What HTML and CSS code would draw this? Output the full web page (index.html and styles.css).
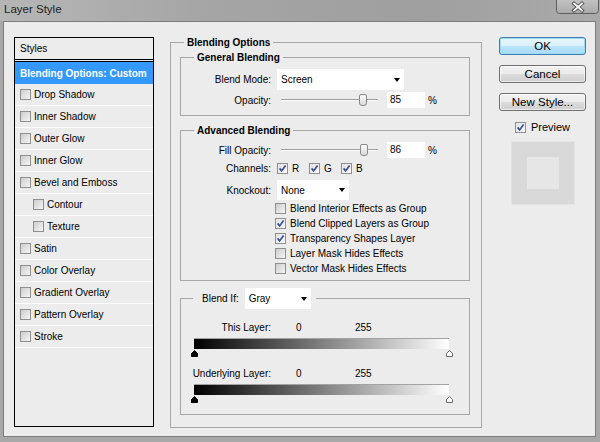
FILE: index.html
```html
<!DOCTYPE html>
<html lang="en">
<head>
    <meta charset="UTF-8">
    <meta name="viewport" content="width=device-width, initial-scale=1.0">
    <title>Layer Style</title>
    <link rel="stylesheet" href="styles.css">
</head>
<body>
<div class="window">
    <div class="titlebar">
        <span class="title">Layer Style</span>
        <span class="close-btn">
            <svg width="43" height="14" viewBox="0 0 43 14">
                <defs>
                    <linearGradient id="closeBg" x1="0" y1="0" x2="0" y2="1">
                        <stop offset="0" stop-color="#c9c9c9"/>
                        <stop offset="1" stop-color="#a9a9a9"/>
                    </linearGradient>
                </defs>
                <rect x="0.5" y="-4" width="42" height="17.5" rx="3" fill="url(#closeBg)" stroke="#5e5e5e"/>
                <path d="M18 3.5 L26 10.5 M26 3.5 L18 10.5" stroke="#4a4a4a" stroke-width="3.6" stroke-linecap="square"/>
                <path d="M18 3.5 L26 10.5 M26 3.5 L18 10.5" stroke="#fff" stroke-width="1.8" stroke-linecap="square"/>
            </svg>
        </span>
    </div>

    <div class="dialog">
        <div class="style-list">
            <div class="list-head">Styles</div>
            <div class="list-item selected">Blending Options: Custom</div>
            <div class="list-item"><span class="cb"></span>Drop Shadow</div>
            <div class="list-item"><span class="cb"></span>Inner Shadow</div>
            <div class="list-item"><span class="cb"></span>Outer Glow</div>
            <div class="list-item"><span class="cb"></span>Inner Glow</div>
            <div class="list-item"><span class="cb"></span>Bevel and Emboss</div>
            <div class="list-item sub"><span class="cb"></span>Contour</div>
            <div class="list-item sub"><span class="cb"></span>Texture</div>
            <div class="list-item"><span class="cb"></span>Satin</div>
            <div class="list-item"><span class="cb"></span>Color Overlay</div>
            <div class="list-item"><span class="cb"></span>Gradient Overlay</div>
            <div class="list-item"><span class="cb"></span>Pattern Overlay</div>
            <div class="list-item"><span class="cb"></span>Stroke</div>
        </div>

        <fieldset class="group outer">
            <legend>Blending Options</legend>

            <fieldset class="group general">
                <legend>General Blending</legend>
                <div class="row select-row">
                    <span class="row-label">Blend Mode:</span>
                    <div class="select blend-mode">Screen<span class="arrow"></span></div>
                </div>
                <div class="row value-row">
                    <span class="row-label">Opacity:</span>
                    <div class="slider"><span class="thumb" style="left: 85%"></span></div>
                    <div class="num">85</div>
                    <span class="pct">%</span>
                </div>
            </fieldset>

            <fieldset class="group advanced">
                <legend>Advanced Blending</legend>
                <div class="row value-row">
                    <span class="row-label">Fill Opacity:</span>
                    <div class="slider"><span class="thumb" style="left: 86%"></span></div>
                    <div class="num">86</div>
                    <span class="pct">%</span>
                </div>
                <div class="row channels-row">
                    <span class="row-label">Channels:</span>
                    <span class="channel"><span class="cb checked"><svg width="9" height="9" viewBox="0 0 9 9"><path d="M1.6 4.4 L3.6 6.9 L7.6 1.4" fill="none" stroke="#3b4f96" stroke-width="1.7"/></svg></span>R</span>
                    <span class="channel"><span class="cb checked"><svg width="9" height="9" viewBox="0 0 9 9"><path d="M1.6 4.4 L3.6 6.9 L7.6 1.4" fill="none" stroke="#3b4f96" stroke-width="1.7"/></svg></span>G</span>
                    <span class="channel"><span class="cb checked"><svg width="9" height="9" viewBox="0 0 9 9"><path d="M1.6 4.4 L3.6 6.9 L7.6 1.4" fill="none" stroke="#3b4f96" stroke-width="1.7"/></svg></span>B</span>
                </div>
                <div class="row knockout-row">
                    <span class="row-label">Knockout:</span>
                    <div class="select knockout">None<span class="arrow"></span></div>
                </div>
                <div class="checks">
                    <div class="check-row"><span class="cb"></span>Blend Interior Effects as Group</div>
                    <div class="check-row"><span class="cb checked"><svg width="9" height="9" viewBox="0 0 9 9"><path d="M1.6 4.4 L3.6 6.9 L7.6 1.4" fill="none" stroke="#3b4f96" stroke-width="1.7"/></svg></span>Blend Clipped Layers as Group</div>
                    <div class="check-row"><span class="cb checked"><svg width="9" height="9" viewBox="0 0 9 9"><path d="M1.6 4.4 L3.6 6.9 L7.6 1.4" fill="none" stroke="#3b4f96" stroke-width="1.7"/></svg></span>Transparency Shapes Layer</div>
                    <div class="check-row"><span class="cb"></span>Layer Mask Hides Effects</div>
                    <div class="check-row"><span class="cb"></span>Vector Mask Hides Effects</div>
                </div>
            </fieldset>

            <fieldset class="group blend-if">
                <legend>
                    <span>Blend If:</span>
                    <div class="select gray">Gray<span class="arrow"></span></div>
                </legend>
                <div class="row layer-row">
                    <span class="row-label">This Layer:</span>
                    <span class="val">0</span>
                    <span>255</span>
                </div>
                <div class="gradient-bar"></div>
                <div class="handles">
                    <svg width="7" height="7" viewBox="0 0 7 7"><path d="M3.5 0.5 L6.5 3.5 V6.5 H0.5 V3.5 Z" fill="#000" stroke="#000"/></svg>
                    <svg width="7" height="7" viewBox="0 0 7 7"><path d="M3.5 0.5 L6.5 3.5 V6.5 H0.5 V3.5 Z" fill="#fff" stroke="#6a6a6a"/></svg>
                </div>
                <div class="row layer-row second">
                    <span class="row-label">Underlying Layer:</span>
                    <span class="val">0</span>
                    <span>255</span>
                </div>
                <div class="gradient-bar"></div>
                <div class="handles">
                    <svg width="7" height="7" viewBox="0 0 7 7"><path d="M3.5 0.5 L6.5 3.5 V6.5 H0.5 V3.5 Z" fill="#000" stroke="#000"/></svg>
                    <svg width="7" height="7" viewBox="0 0 7 7"><path d="M3.5 0.5 L6.5 3.5 V6.5 H0.5 V3.5 Z" fill="#fff" stroke="#6a6a6a"/></svg>
                </div>
            </fieldset>
        </fieldset>

        <div class="actions">
            <button class="btn default">OK</button>
            <button class="btn">Cancel</button>
            <button class="btn">New Style...</button>
            <div class="preview-check">
                <span class="cb checked"><svg width="9" height="9" viewBox="0 0 9 9"><path d="M1.6 4.4 L3.6 6.9 L7.6 1.4" fill="none" stroke="#3b4f96" stroke-width="1.7"/></svg></span>Preview
            </div>
            <div class="swatch"><div class="swatch-inner"></div></div>
        </div>
    </div>
</div>
</body>
</html>
```

FILE: styles.css
```css
* {
    box-sizing: border-box;
}
body {
    margin: 0;
    font-family: Tahoma, "Liberation Sans", sans-serif;
    font-size: 10px;
    color: #000;
}
.window {
    width: 600px;
    height: 442px;
    background: #a8a8a8;
    display: flex;
    flex-direction: column;
}
.titlebar {
    height: 21px;
    flex: none;
    display: flex;
    align-items: flex-start;
    justify-content: space-between;
    background: linear-gradient(to right, #b6b6b6, #a5a5a5 35%, #9f9f9f 70%, #aaaaaa);
}
.title {
    font-size: 11.5px;
    color: #222;
    padding: 3px 0 0 4px;
}
.close-btn {
    height: 14px;
    margin-right: 1px;
}
.close-btn svg {
    display: block;
}
.dialog {
    flex: 1;
    margin: 0 4px 5px 3px;
    background: #ececec;
    border: 1px solid #7c7c7c;
    display: flex;
    align-items: flex-start;
    padding: 14px 0 0 10px;
}

/* left list */
.style-list {
    width: 140px;
    height: 390px;
    margin-top: 1px;
    border: 1px solid #000;
    flex: none;
}
.list-head {
    height: 24px;
    line-height: 21px;
    padding-left: 5px;
    border-bottom: 3px double #000;
}
.list-item {
    height: 22px;
    display: flex;
    align-items: center;
    gap: 3px;
    padding-left: 5px;
    border-bottom: 1px solid #fcfcfc;
}
.list-item.selected {
    background: #3399ff;
    color: #fff;
    font-weight: bold;
    border-bottom: none;
}
.list-item.sub {
    padding-left: 18px;
}

/* checkbox */
.cb {
    width: 11px;
    height: 11px;
    flex: none;
    border: 1px solid #8f8f8f;
    background: linear-gradient(135deg, #cdcdcd, #f5f5f5);
    display: inline-flex;
}
.cb.checked {
    background: linear-gradient(135deg, #e2e2e2, #fbfbfb);
}
.cb svg {
    display: block;
}

/* group boxes */
.group {
    border: 1px solid #a6a6a6;
    margin: 0;
    padding: 0;
    min-width: 0;
}
.group legend {
    font-weight: bold;
    line-height: 13px;
    padding: 0 3px;
    margin-left: 13px;
}
.outer {
    width: 312px;
    height: 392px;
    margin-left: 16px;
    flex: none;
}
.outer > .group {
    margin: 7px 11px 0 9px;
}
.outer > .general {
    margin-top: 2px;
    padding-bottom: 7px;
}
.outer > .advanced {
    margin-top: 8px;
    padding-bottom: 4px;
}
.outer > .blend-if {
    margin-top: 7px;
    padding-bottom: 11px;
}

.row {
    display: flex;
    align-items: center;
    height: 16px;
}
.row-label {
    width: 90px;
    flex: none;
    text-align: right;
    margin-right: 6px;
}
.select-row {
    height: 21px;
    margin-top: 5px;
}
.general .value-row {
    margin-top: 2px;
}
.advanced .value-row {
    margin-top: 5px;
}
.select {
    height: 21px;
    background: #fff;
    display: flex;
    align-items: center;
    justify-content: space-between;
    padding: 0 4px;
    font-weight: normal;
}
.arrow {
    width: 0;
    height: 0;
    border-left: 3.5px solid transparent;
    border-right: 3.5px solid transparent;
    border-top: 4px solid #000;
}
.blend-mode {
    width: 127px;
}
.knockout {
    width: 72px;
    height: 20px;
}
.slider {
    width: 97px;
    height: 14px;
    margin-left: 4px;
    position: relative;
}
.slider::before {
    content: "";
    position: absolute;
    left: 0;
    right: 0;
    top: 6px;
    height: 1px;
    background: #9d9d9d;
    border-bottom: 1px solid #fff;
    box-sizing: content-box;
}
.thumb {
    position: absolute;
    top: 1px;
    width: 8px;
    height: 12px;
    margin-left: -4px;
    border: 1px solid #8a8a8a;
    border-radius: 2px 2px 3px 3px;
    background: linear-gradient(#fbfbfb, #dadada);
}
.num {
    width: 38px;
    height: 16px;
    line-height: 16px;
    margin-left: 9px;
    padding-left: 3px;
    background: #fff;
}
.pct {
    margin-left: 3px;
}
.channels-row {
    margin-top: 2px;
}
.channel {
    width: 32px;
    display: flex;
    align-items: center;
    gap: 4px;
}
.knockout-row {
    height: 20px;
    margin-top: 4px;
}
.checks {
    padding-left: 94px;
    margin-top: 1px;
}
.check-row {
    height: 15px;
    display: flex;
    align-items: center;
    gap: 4px;
}

/* blend if */
.blend-if legend {
    display: flex;
    align-items: center;
    font-weight: normal;
    margin-left: 12px;
    padding: 0 5px 0 9px;
}
.gray {
    width: 66px;
    margin-left: 6px;
}
.layer-row {
    margin-top: 10px;
}
.layer-row.second {
    margin-top: 8px;
}
.layer-row .row-label {
    margin-right: 25px;
}
.val {
    width: 59px;
}
.gradient-bar {
    width: 255px;
    height: 11px;
    margin: 3px 0 0 13px;
    border-top: 1px solid #a3a3a3;
    background: linear-gradient(to right, #000, #fff);
}
.handles {
    width: 262px;
    height: 7px;
    margin: 1px 0 0 10px;
    display: flex;
    justify-content: space-between;
}
.handles svg {
    display: block;
}

/* right column */
.actions {
    width: 87px;
    margin: 1px 0 0 17px;
    flex: none;
    display: flex;
    flex-direction: column;
    align-items: center;
}
.btn {
    width: 87px;
    height: 18px;
    margin-bottom: 10px;
    padding: 0;
    font-family: Tahoma, "Liberation Sans", sans-serif;
    font-size: 11.5px;
    color: #000;
    border: 1px solid #707070;
    border-radius: 3px;
    background: linear-gradient(#f2f2f2 0%, #ebebeb 50%, #dddddd 50%, #cfcfcf 100%);
    box-shadow: inset 0 0 0 1px rgba(255, 255, 255, 0.6);
}
.btn.default {
    border-color: #3c7fb1;
    background: linear-gradient(#eaf6fd 0%, #d9f0fc 50%, #bee6fd 50%, #a7d9f5 100%);
    box-shadow: inset 0 0 0 1px #9fdcf9;
}
.preview-check {
    height: 12px;
    display: flex;
    align-items: center;
    gap: 5px;
    font-size: 11px;
    margin-bottom: 8px;
}
.swatch {
    width: 64px;
    height: 64px;
    background: #d9d9d9;
    border: 1px solid #e4e4e4;
    display: flex;
    align-items: center;
    justify-content: center;
}
.swatch-inner {
    width: 32px;
    height: 32px;
    background: #e6e6e6;
}
```
